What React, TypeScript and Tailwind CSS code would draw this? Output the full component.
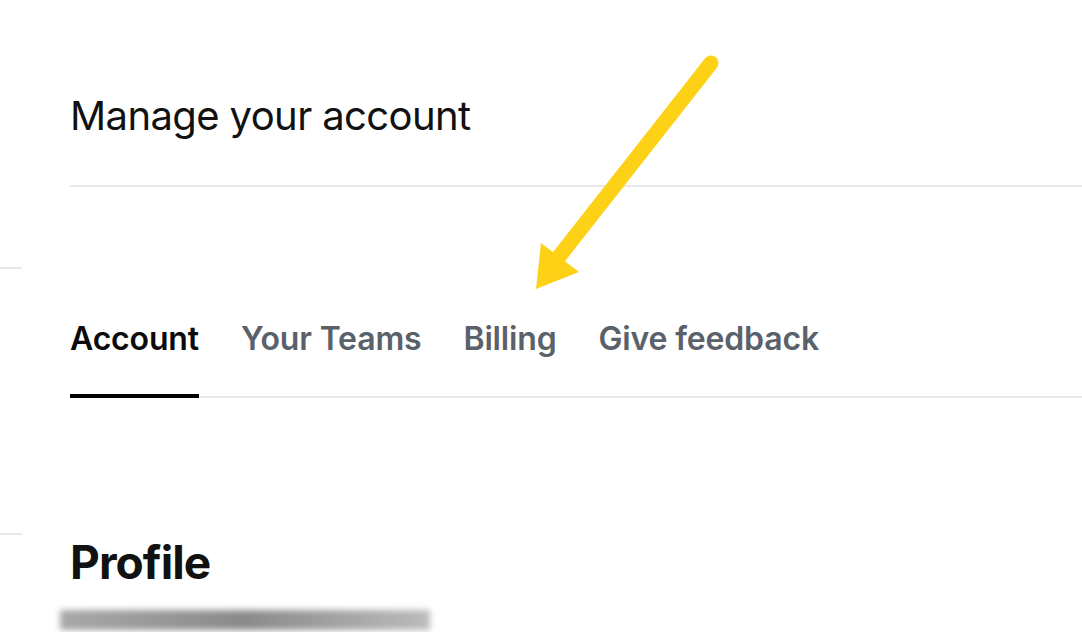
import React from 'react';

const tabs = ['Account', 'Your Teams', 'Billing', 'Give feedback'];

const App: React.FC = () => {
  return (
    <div
      className="relative w-[1082px] h-[632px] overflow-hidden bg-white text-[#111111]"
      style={{ fontFamily: 'Inter, "Noto Sans", sans-serif' }}
    >
      {/* stubs of the sidebar on the left */}
      <div className="absolute left-0 top-[267px] w-[22px] h-[2px] bg-[#e8e8e8]" />
      <div className="absolute left-0 top-[533px] w-[22px] h-[2px] bg-[#e8e8e8]" />

      <div className="pl-[70px] pt-[92px]">
        <h1 className="text-[40px] leading-[48px] font-normal tracking-[-0.015em]">Manage your account</h1>
        <div className="mt-[45px] h-[2px] bg-[#e8e8e8]" />

        <div className="mt-[133px] flex gap-[42px] border-b-2 border-[#e8e8e8]">
          {tabs.map((t, i) => (
            <div
              key={t}
              className={
                'pb-[36px] text-[32px] leading-[38px] font-semibold tracking-[-0.005em] ' +
                (i === 0 ? 'text-[#0b0b0b] border-b-4 border-black -mb-[2px]' : 'text-[#5b616b]')
              }
            >
              {t}
            </div>
          ))}
        </div>

        <h2 className="mt-[138px] text-[46px] leading-[52px] font-bold tracking-[-0.02em]">Profile</h2>
        <div className="mt-[22px] -ml-[10px] w-[370px] h-[20px] bg-gradient-to-r from-[#a8a8a8] via-[#8a8a8a] to-[#bcbcbc] blur-[3px]" />
      </div>

      {/* annotation arrow */}
      <svg className="absolute left-0 top-0" width="1082" height="632" viewBox="0 0 1082 632">
        <line x1="711" y1="63" x2="558" y2="258" stroke="#fdd216" strokeWidth="15" strokeLinecap="round" />
        <polygon points="536,289 541,243 579,272" fill="#fdd216" />
      </svg>
    </div>
  );
};

export default App;
